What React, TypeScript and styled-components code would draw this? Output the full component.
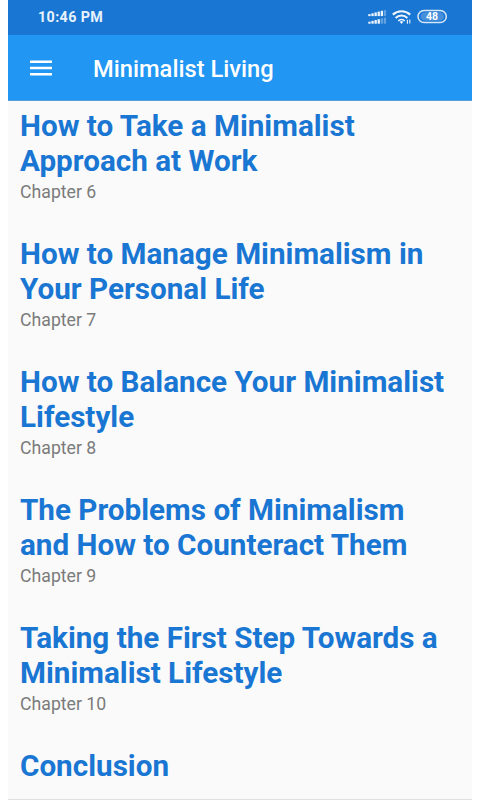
import React from "react";
import styled, { createGlobalStyle } from "styled-components";

const Global = createGlobalStyle`
  * { box-sizing: border-box; }
  body { margin: 0; background: #fff; font-family: Roboto, sans-serif; overflow: hidden; }
`;
const Screen = styled.div`
  width: 464px; height: 800px; margin-left: 8px; background: #fafafa;
  display: flex; flex-direction: column; overflow: hidden;
`;
const StatusBar = styled.div`
  height: 35px; flex: none; background: #1976d2; color: #e8f2fb;
  display: flex; align-items: center; justify-content: space-between;
  padding: 0 24px 1px 30px;
`;
const Clock = styled.span`
  font-size: 14.3px; font-weight: 700; line-height: 20px; letter-spacing: 0.38px;
`;
const StatusIcons = styled.svg`
  display: block; width: 80px; height: 18px;
`;
const BatteryText = styled.text`
  font: 700 10.5px Roboto, sans-serif; fill: #fff;
`;
const AppBar = styled.header`
  height: 66px; flex: none; background: #2196f3; color: #fff;
  display: flex; align-items: center; padding: 2px 22px 0;
  border-bottom: 1px solid #52a0dc;
`;
const MenuIcon = styled.svg`
  display: block; width: 22px; height: 16px; margin: 0 41px 1px 0;
`;
const Title = styled.h1`
  margin: 0; font-size: 23.7px; font-weight: 500; line-height: 30px;
`;
const List = styled.main`
  flex: 1; padding: 7px 12px 0; border-bottom: 1px solid #e0e0e0; overflow: hidden;
`;
const Chapter = styled.article`
  height: 128px;
`;
const Heading = styled.h2`
  margin: 0; font-size: 29.65px; font-weight: 700; line-height: 35px; color: #1976d2; white-space: nowrap;
`;
const Label = styled.p`
  margin: 3px 0 0; font-size: 17.7px; line-height: 22px; color: #7b7b7b;
`;

const chapters = [
  { lines: ["How to Take a Minimalist", "Approach at Work"], label: "Chapter 6" },
  { lines: ["How to Manage Minimalism in", "Your Personal Life"], label: "Chapter 7" },
  { lines: ["How to Balance Your Minimalist", "Lifestyle"], label: "Chapter 8" },
  { lines: ["The Problems of Minimalism", "and How to Counteract Them"], label: "Chapter 9" },
  { lines: ["Taking the First Step Towards a", "Minimalist Lifestyle"], label: "Chapter 10" },
  { lines: ["Conclusion"], label: "" },
];

const signalBars = [
  { x: 0.3, h: 2 },
  { x: 3.4, h: 2.8 },
  { x: 6.5, h: 3.7 },
  { x: 9.6, h: 4.5 },
  { x: 12.7, h: 5.3 },
  { x: 15.8, h: 6 },
];

function Signal({ base, strong }: { base: number; strong: number }) {
  return (
    <g fill="#eef5fc">
      {signalBars.map((b, i) => (
        <rect key={b.x} x={b.x} y={base - b.h} width="2.3" height={b.h} opacity={i < strong ? 1 : 0.35} />
      ))}
    </g>
  );
}

export default function App() {
  return (
    <>
      <Global />
      <Screen>
        <StatusBar>
          <Clock>10:46 PM</Clock>
          <StatusIcons viewBox="0 0 80 18">
            <Signal base={8.1} strong={5} />
            <Signal base={15.7} strong={4} />
            <g fill="none" stroke="#eef5fc" strokeWidth="2.1">
              <path d="M24.8 6.6a13 13 0 0 1 17.4 0" />
              <path d="M27.6 9.9a8.6 8.6 0 0 1 11.8 0" />
              <path d="M30.3 12.9a4.6 4.6 0 0 1 6.4 0" strokeWidth="1.6" />
            </g>
            <path d="M31.7 13.7a2.7 2.7 0 0 1 3.6 0L33.5 15.9z" fill="#eef5fc" />
            <path d="M39.4 15.8v-4M41.8 11.4v4" fill="none" stroke="#e8f2fb" strokeWidth="1.1" />
            <rect x="50" y="2.4" width="28.3" height="12.2" rx="6.1" fill="none" stroke="#d7e7f7" strokeWidth="1.5" />
            <path d="M57 4.2H71.5a4.3 4.3 0 0 1 0 8.6H57a4.3 4.3 0 0 1 0-8.6z" fill="#468fdb" />
            <BatteryText x="64" y="12.2" textAnchor="middle">48</BatteryText>
          </StatusIcons>
        </StatusBar>
        <AppBar>
          <MenuIcon viewBox="0 0 22 16" fill="#fff">
            <path d="M0 .5h22v2.4H0zM0 6.8h22v2.4H0zM0 13h22v2.4H0z" />
          </MenuIcon>
          <Title>Minimalist Living</Title>
        </AppBar>
        <List>
          {chapters.map((c) => (
            <Chapter key={c.lines[0]}>
              <Heading>{c.lines.map((l, i) => <React.Fragment key={l}>{i > 0 && <br />}{l}</React.Fragment>)}</Heading>
              {c.label && <Label>{c.label}</Label>}
            </Chapter>
          ))}
        </List>
      </Screen>
    </>
  );
}
